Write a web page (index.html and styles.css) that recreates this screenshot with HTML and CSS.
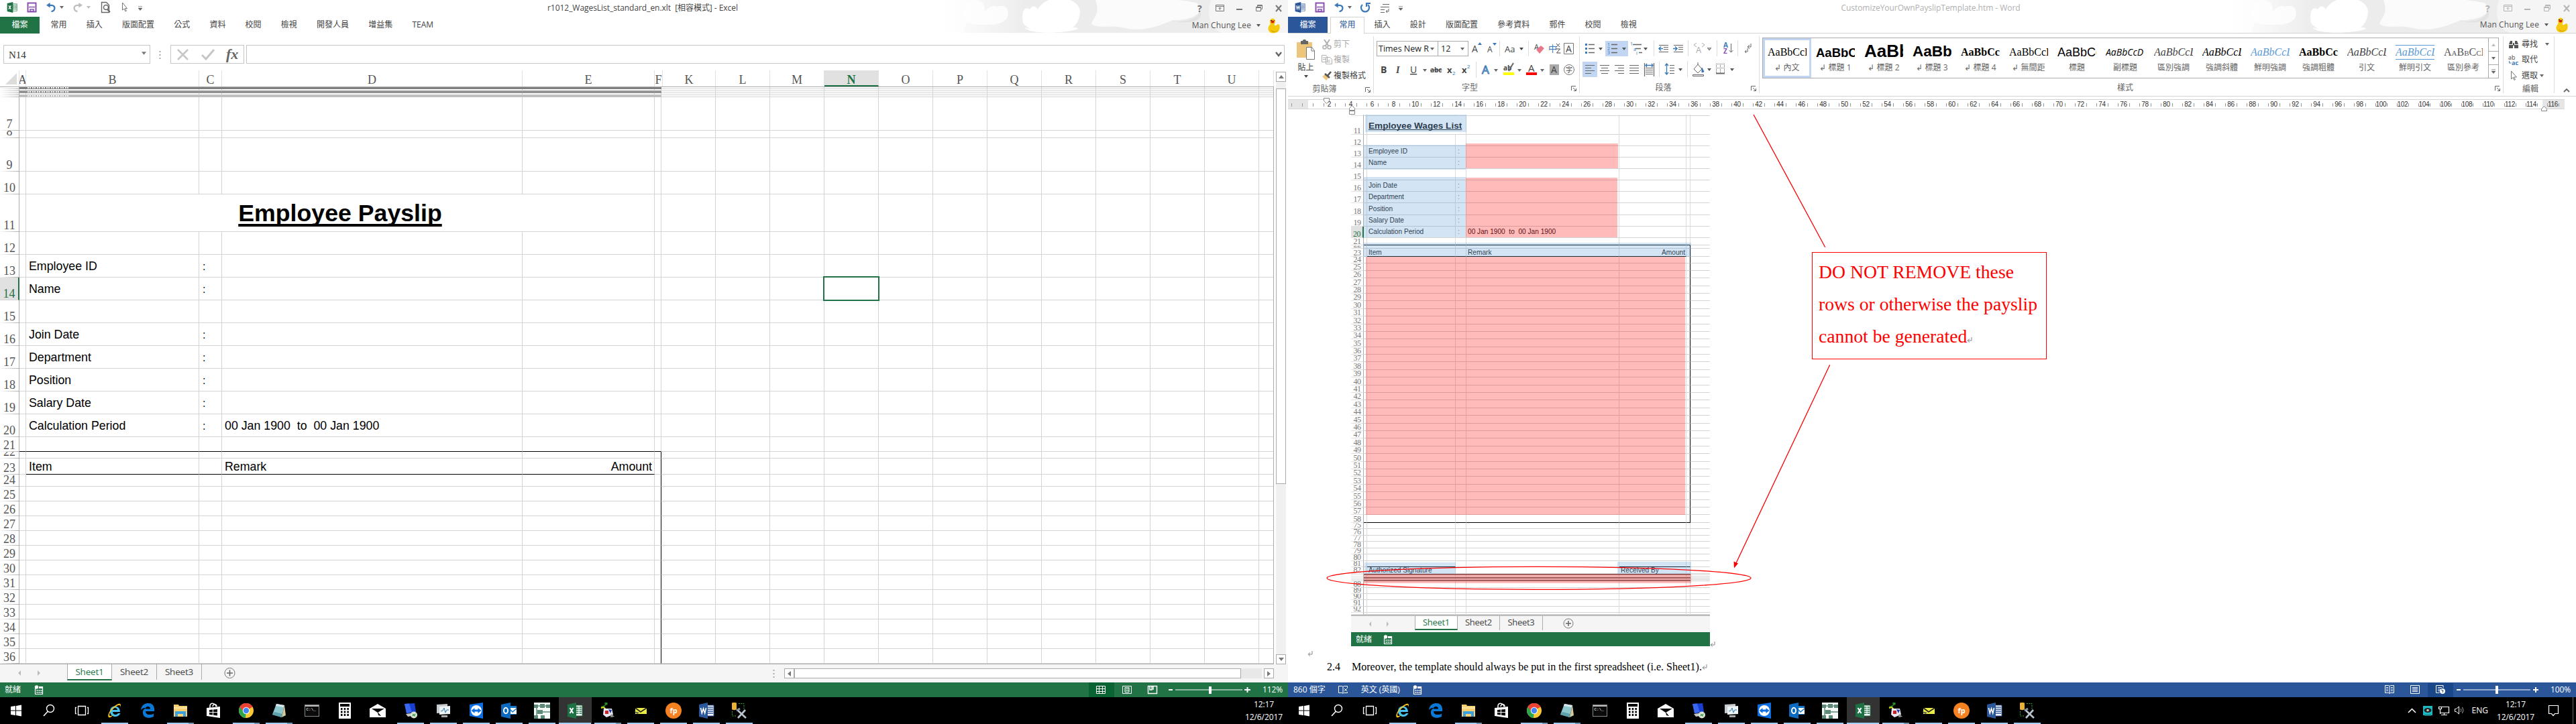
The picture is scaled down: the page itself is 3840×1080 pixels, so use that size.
FILE: index.html
```
<!DOCTYPE html>
<html lang="zh-Hant">
<head>
<meta charset="utf-8">
<title>Desktop</title>
<link rel="stylesheet" href="styles.css">
</head>
<body>
<svg class="defs" width="0" height="0" aria-hidden="true">
  <defs>
    <linearGradient id="fade"><stop offset="0" stop-color="#fff"/><stop offset=".25" stop-color="#fff" stop-opacity="0"/></linearGradient>
    <symbol id="art" viewBox="0 0 515 49">
      <rect width="515" height="49" fill="#ececec"/>
      <path d="M0 0h50L30 49H0z" fill="#f7f7f7"/>
      <path d="M30 25C30 8 38 0 48 0s17 6 14 18c8-10 14-10 20-8 6-2 12-2 15 4 3 10-2 20-18 22-20 2-46 2-49-11z" fill="#fbfbfb"/>
      <path d="M120 34c-3-16 2-26 10-20 4-8 10-4 12 0C150 0 165-4 180-2c20 2 28 14 24 26-2 12-10 18-16 20-24 4-56 8-68-10z" fill="#fff"/>
      <path d="M122 41c30 8 46-4 62-1 8 1 16 0 18 3-14 6-70 10-80-2z" fill="#fff"/>
      <path d="M228 0c60-6 120-2 150 4 16 14-4 26-34 26-22 8-40 18-72 12-20-6-36 2-50-6 2-10 14-14 6-36z" fill="#fbfbfb"/>
      <path d="M336 30c30 6 50-4 46-18 10 14-4 28-46 18z" fill="#e2e2e2"/>
      <path d="M400 0h115v49H415c-20-10-20-30-15-49z" fill="#f5f5f5"/>
      <rect width="515" height="49" fill="url(#fade)"/>
    </symbol>
    <symbol id="controls" viewBox="0 0 130 24">
      <text x="3" y="17" font-family="Open Sans, sans-serif" font-weight="700" font-size="14" fill="currentColor">?</text>
      <path d="M30.500 6.500h12v9h-12zM30.500 8.500h12M36.500 14v-4M34.500 12l2-2 2 2" fill="none" stroke="currentColor"/>
      <path d="M61 12h9v2h-9z" fill="currentColor"/>
      <path d="M90.500 10.500h7v5h-7zM92.500 10V6.500h7v6h-2M90 9.500h8M92 7.500h8" fill="none" stroke="currentColor"/>
      <path d="M120 7l8 9M128 7l-8 9" fill="none" stroke="currentColor" stroke-width="2"/>
    </symbol>
    <symbol id="duck" viewBox="0 0 24 24">
      <path d="M7 6c0-6 8-6 8 0 0 3-2 4-1 6 3 1 4-2 6-2 3 2 2 10-2 12-4 2-10 2-12-1-3-4-1-8 1-10 1-2 0-3 0-5z" fill="#f6c90e"/>
      <path d="M8 18c3 4 9 4 11 0-1 4-9 6-11 0z" fill="#c98f00"/><ellipse cx="11" cy="6.500" rx="2.500" ry="2" fill="#d81e05"/><path d="M8 4h2v1H8zM13 4h1v1h-1z" fill="#222"/>
    </symbol>
    <symbol id="save" viewBox="0 0 16 16"><path d="M1.500 1.500h12v13h-12z" fill="none" stroke="#8a4fb0" stroke-width="2"/><path d="M3 7.500h9M5 11h5v3H5z" fill="none" stroke="#8a4fb0" stroke-width="1.500"/></symbol>
    <symbol id="undo" viewBox="0 0 16 16"><path d="M6 0v8L0 4z" fill="currentColor"/><path d="M4 4h4c7 0 7 9 0 10" fill="none" stroke="currentColor" stroke-width="2.400"/></symbol>
    <symbol id="arr" viewBox="0 0 6 4"><path d="M0 0h6L3 4z" fill="currentColor"/></symbol>
    <symbol id="more" viewBox="0 0 6 7"><path d="M0 .5h6M0 3h6L3 6.500z" fill="#666" stroke="#666" stroke-width=".6"/></symbol>
    <symbol id="launch" viewBox="0 0 8 8"><path d="M.5 7V.5H7M3 3l4 4M7.500 4v3.500H4" fill="none" stroke="#666"/></symbol>
    <symbol id="cal" viewBox="0 0 14 14"><path d="M1.500 5v8.500h11v-11H7" fill="none" stroke="#fff" stroke-width="1.200"/><circle cx="3.500" cy="3" r="2.700" fill="#fff"/><path d="M7 3h5v2H7z" fill="#fff"/><path d="M3.500 8h2M6.500 8h2M9.500 8h2M3.500 11h2M6.500 11h2M9.500 11h2" stroke="#fff" stroke-width="1.400"/></symbol>
    <symbol id="ret" viewBox="0 0 8 8"><path d="M7 0v5H1M4 2.500L1 5l3 2.500" fill="none" stroke="#888"/></symbol>

    <symbol id="t-start" viewBox="0 0 24 24"><path d="M4 6l7-1v6.500H4zM12 5l8-1.500v8h-8zM4 12.500h7V19l-7-1zM12 12.500h8v8L12 19z" fill="#fff"/></symbol>
    <symbol id="t-search" viewBox="0 0 24 24"><circle cx="14" cy="9" r="5.500" fill="none" stroke="#fff" stroke-width="1.400"/><path d="M10.500 13L4 20" stroke="#fff" stroke-width="1.600"/></symbol>
    <symbol id="t-view" viewBox="0 0 24 24"><path d="M6.500 5.500h11v13h-11zM4 7.500H2.500v9H4M20 7.500h1.500v9H20" fill="none" stroke="#fff" stroke-width="1.300"/></symbol>
    <symbol id="t-ie" viewBox="0 0 24 24"><path d="M5 13c0-10 15-10 15 1H9c0 5 6 5 8 2h3.500C17 24 5 22 5 13zm4-2h7c0-4-7-4-7 0z" fill="#46c0f2"/><path d="M3 22C0 19 6 8 15 3c6-3 7 0 5 4 1-4-2-4-6-1C6 11 2 19 5 20c1 .5 4-1 5-2-2 3-5 5-7 4z" fill="#f8c41c"/></symbol>
    <symbol id="t-edge" viewBox="0 0 24 24"><path d="M2 11C3 3 9 1 13 1c6 0 10 4 9 12H9c0 6 8 6 12 3.500v4.500C13 25 4 22 5 14c0-3 2-5 5-6 0 0-5-1-8 3zm7-1.500h7c0-5-7-5-7 0z" fill="#0a78d7"/></symbol>
    <symbol id="t-folder" viewBox="0 0 24 24"><path d="M2 3h7l1 2h12v16H2z" fill="#f7d071"/><path d="M2 7h20v2H2z" fill="#fbe3a2"/><path d="M4 13h16v8h-4v-4H8v4H4z" fill="#3aa0e0"/></symbol>
    <symbol id="t-store" viewBox="0 0 24 24"><path d="M2 8l20-2v17L2 20z" fill="#fff"/><path d="M7 9V5c0-5 8-5 9 1M11 6c1-5 6-4 6 0" fill="none" stroke="#fff" stroke-width="1.500"/><path d="M6 11l5-.5V14H6zM12 10.400l6-.5V14h-6zM6 15h5v3.500L6 18zM12 15h6v4.500l-6-.8z" fill="#000"/></symbol>
    <symbol id="t-chrome" viewBox="0 0 24 24"><circle cx="12" cy="12" r="11" fill="#fcc934"/><path d="M12 12L2.500 6.500A11 11 0 0 1 21.500 6.500z" fill="#ea4335"/><path d="M12 12L2.500 6.500A11 11 0 0 0 11 23z" fill="#2fa34f"/><path d="M12 7h9.800a11 11 0 0 0-19.300-.5L8 14z" fill="#ea4335"/><circle cx="12" cy="12" r="5.200" fill="#fff"/><circle cx="12" cy="12" r="4.200" fill="#4285f4"/></symbol>
    <symbol id="t-note" viewBox="0 0 24 24"><path d="M8 2l12 2-4 18-14-4z" fill="#8fc7cf"/><path d="M8 2l12 2-1 3L7 5z" fill="#d9e8ea"/><path d="M20 4l2 15-6 3z" fill="#d6c89a"/><path d="M5 14l12 3-1 5-14-4z" fill="#5d9faa"/></symbol>
    <symbol id="t-cmd" viewBox="0 0 24 24"><rect x="1.500" y="3.500" width="21" height="17" fill="#0a0a0a" stroke="#888"/><path d="M2 4h20v2H2z" fill="#bbb"/><text x="3.500" y="12" font-size="6" font-family="Liberation Mono, monospace" fill="#fff">C:\_</text></symbol>
    <symbol id="t-calc" viewBox="0 0 24 24"><path d="M3 0h18v24H3z" fill="#fff"/><path d="M5 2h14v4H5z" fill="#000"/><path d="M6 9.500h12M6 14h12M6 18.500h12" stroke="#000" stroke-width="3" stroke-dasharray="2.500 2.200"/></symbol>
    <symbol id="t-mail" viewBox="0 0 24 24"><path d="M0 9l12-7 12 7v13H0z" fill="#fff"/><path d="M3 9h19L12 15z" fill="#000"/><path d="M12 14l5 6-4-1z" fill="#000"/></symbol>
    <symbol id="t-rdp" viewBox="0 0 24 24"><path d="M3 2l15-1 2 13-14 2z" fill="#173fd0"/><path d="M3 2l7-.5L14 15l-8 1z" fill="#3b66ee"/><path d="M5 17l14-2 2 4-13 2z" fill="#c9c9c9"/><circle cx="17" cy="18.500" r="5" fill="#d9e4d6"/><path d="M14.500 20l5-3M15 17l4 3.500" stroke="#3a9a3a" stroke-width="1.200"/></symbol>
    <symbol id="t-mon" viewBox="0 0 24 24"><path d="M2 3l16-1v13L2 16z" fill="#c6cbcf"/><path d="M6 6l16-1v12L6 18z" fill="#eef3f6"/><path d="M8 13l3-1 2-4 2 7 2-4h3" fill="none" stroke="#2a7fb0"/><path d="M9 19h9v3H9z" fill="#aaa"/></symbol>
    <symbol id="t-tv" viewBox="0 0 24 24"><path d="M2 3l20-3v24L2 20z" fill="#0d6fe0"/><circle cx="12" cy="12" r="8" fill="#fff"/><path d="M4.500 12l5-4v2.500h5V8l5 4-5 4v-2.500h-5V16z" fill="#0d6fe0"/></symbol>
    <symbol id="t-outlook" viewBox="0 0 24 24"><path d="M10 5h13v13H10z" fill="#0f77c9"/><path d="M12 8h11v9H12z" fill="#fff"/><path d="M12 9l5 5 6-5" fill="none" stroke="#0f77c9" stroke-width="1.500"/><path d="M0 3l14-3v24L0 21z" fill="#0d6abf"/><ellipse cx="7" cy="12" rx="3" ry="4.300" fill="none" stroke="#fff" stroke-width="2"/></symbol>
    <symbol id="t-flow" viewBox="0 0 24 24"><path d="M0 0h24v24H0z" fill="#f5faf6"/><path d="M0 3h6v5H0zM9 2h7v6H9zM18 3h6v5h-6zM5 11h8v6H5zM0 19h6v5H0zM10 19h6v5h-6z" fill="#5f8a78"/><path d="M6 5h12M12 14h12M4 8v12" stroke="#5f8a78" stroke-width="1.500"/></symbol>
    <symbol id="t-excel" viewBox="0 0 24 24"><path d="M12 4h11v16H12z" fill="#fff" stroke="#217346"/><path d="M14 7h8M14 10h8M14 13h8M14 16h8" stroke="#217346" stroke-width="1.500"/><path d="M18 5v14" stroke="#fff"/><path d="M1 3l13-3v24L1 21z" fill="#1e7145"/><path d="M4.500 8l5 8M9.500 8l-5 8" stroke="#fff" stroke-width="2"/></symbol>
    <symbol id="t-word" viewBox="0 0 24 24"><path d="M12 4h11v16H12z" fill="#fff" stroke="#2b579a"/><path d="M14 7h8M14 10h8M14 13h8M14 16h8" stroke="#2b579a" stroke-width="1.300"/><path d="M1 3l13-3v24L1 21z" fill="#2b579a"/><path d="M3.500 8l1.800 8 2.200-7 2.200 7 1.800-8" fill="none" stroke="#fff" stroke-width="1.600"/></symbol>
    <symbol id="t-nut" viewBox="0 0 24 24"><path d="M8 0h3v3H8zM9 3l-3 4-4-1" stroke="#2c9a2c" fill="#1c7a1c"/><path d="M2 8l4-1 3 3" fill="none" stroke="#d8d820" stroke-width="2"/><path d="M6 9h12l2 9-10 4-5-4z" fill="#e8e8f4"/><path d="M8 12h5v5H8z" fill="#c22"/><path d="M13 10l5 1-2 5z" fill="#2233aa"/><path d="M17 17l5 4-6 1z" fill="#999"/></symbol>
    <symbol id="t-memo" viewBox="0 0 24 24"><path d="M4 8h17v9H4z" fill="#ecec46"/><path d="M4 8l8 6 9-6" fill="none" stroke="#222" stroke-width="1.600"/><path d="M2 13l5 4 3-2" fill="#555"/></symbol>
    <symbol id="t-fp" viewBox="0 0 24 24"><circle cx="12" cy="12" r="12" fill="#f58220"/><text x="12" y="16" text-anchor="middle" font-family="Open Sans, sans-serif" font-weight="700" font-size="11" fill="#fff">fp</text></symbol>
    <symbol id="t-tool" viewBox="0 0 24 24"><path d="M1 1c0-1.500 7-1.500 7 0v9c0 1.500-7 1.500-7 0z" fill="#e8b23a"/><path d="M11 1.500h8v8M1.500 13v7h7" fill="none" stroke="#2fae2f" stroke-dasharray="2 1.500"/><path d="M9 11l13 12M21 11L10 23" stroke="#b9c4cf" stroke-width="2.600"/><path d="M8 12l5-3" stroke="#8a98a6" stroke-width="3"/></symbol>
  </defs>
</svg>

<main class="desktop">
  <section class="window excel">
    <header class="titlebar">
      <svg class="art"><use href="#art"/></svg>
      <svg class="qat" width="230" height="25">
        <use href="#t-excel" x="9" y="3" width="18" height="16"/>
        <use href="#save" x="40" y="3" width="16" height="16"/>
        <use href="#undo" x="69" y="4" width="15" height="15" color="#3b78b8"/><use href="#arr" x="89" y="9" width="6" height="4" color="#666"/>
        <g transform="translate(123 4) scale(-1 1)"><use href="#undo" width="15" height="15" color="#bdbdbd"/></g><use href="#arr" x="129" y="9" width="6" height="4" color="#bdbdbd"/>
        <path d="M151.500 18.500v-15h7l4 4v11z" fill="none" stroke="#666" stroke-width="1.400"/><circle cx="158" cy="11" r="3.500" fill="#fff" stroke="#666" stroke-width="1.500"/><path d="M160 14l4 4" stroke="#666" stroke-width="2"/>
        <path d="M182.500 4v11l2.500-2 2 4 1.500-.7-2-3.800h3z" fill="#fff" stroke="#777"/>
        <use href="#more" x="206" y="9" width="6" height="7"/>
      </svg>
      <h1 class="caption">r1012_WagesList_standard_en.xlt&nbsp; [相容模式] - Excel</h1>
      <svg class="controls"><use href="#controls"/></svg>
    </header>
    <nav class="tabs">
      <span class="file">檔案</span><span>常用</span><span>插入</span><span>版面配置</span><span>公式</span><span>資料</span><span>校閱</span><span>檢視</span><span>開發人員</span><span>增益集</span><span>TEAM</span>
      <div class="user">Man Chung Lee<svg width="6" height="4"><use href="#arr"/></svg><svg class="duck" width="24" height="24"><use href="#duck"/></svg></div>
    </nav>
    <div class="formula">
      <div class="namebox">N14<svg width="7" height="5"><use href="#arr"/></svg></div>
      <svg class="dots" width="30" height="30"><path d="M14.500 9v14" stroke="#aaa" stroke-width="2" stroke-dasharray="2 3"/></svg>
      <div class="fx"><svg width="108" height="26"><path d="M10 6l15 15M25 6L10 21" stroke="#c6c6c6" stroke-width="2.500"/><path d="M46 14l6 6L64 6" fill="none" stroke="#c6c6c6" stroke-width="3"/><text x="82" y="20" font-family="Liberation Serif, serif" font-style="italic" font-weight="700" font-size="22" fill="#666">fx</text></svg></div>
      <div class="finput"><svg width="14" height="10"><path d="M2 2l4 5 4-5" fill="none" stroke="#666" stroke-width="2.400"/></svg></div>
    </div>
    <div class="sheet">
      <div class="grid">
        <div class="colheads" id="colheads"></div>
        <div id="rows"></div>
        <div class="selection"></div>
      </div>
      <div class="vscroll"><i class="btn"><svg width="8" height="5"><path d="M0 5h8L4 0z" fill="#777"/></svg></i><i class="thumb"></i><i class="btn end"><svg width="8" height="5"><path d="M0 0h8L4 5z" fill="#777"/></svg></i></div>
    </div>
    <div class="sheettabs">
      <svg width="100" height="27"><path d="M31 9v8l-4-4zM56 9v8l4-4z" fill="#bbb"/></svg>
      <span class="on">Sheet1</span><span>Sheet2</span><span>Sheet3</span>
      <svg width="60" height="27"><circle cx="41.500" cy="13" r="7.500" fill="none" stroke="#777"/><path d="M37 13h9M41.500 8.500v9" stroke="#666" stroke-width="1.600"/></svg>
      <div class="hscroll"><svg width="16" height="16"><path d="M2.500 2v12" stroke="#aaa" stroke-width="2" stroke-dasharray="2 3"/></svg><i class="btn"><svg width="5" height="8"><path d="M5 0v8L0 4z" fill="#777"/></svg></i><i class="thumb"></i><i class="btn"><svg width="5" height="8"><path d="M0 0v8l5-4z" fill="#777"/></svg></i></div>
    </div>
    <footer class="status">
      <span>就緒</span><svg width="14" height="14"><use href="#cal"/></svg>
      <svg class="zoom" width="290" height="22"><path d="M33 0h38v22H33z" fill="#0a6332"/>
        <path d="M44.500 5.500h13v11h-13zM44 9.500h14M44 13.500h14M48.500 5v12M53.500 5v12" fill="none" stroke="#fff"/>
        <path d="M83.500 5.500h13v11h-13zM87 7.500h6v7h-6zM88 9.500h5M88 12h5" fill="none" stroke="#fff"/>
        <path d="M121.500 5.500h13v11h-13zM124 5v6h3V5M129 5v6" fill="none" stroke="#fff" stroke-width="1.500"/>
        <path d="M152 10h6v2h-6zM162 10.500h100v1H162zM212 6h4v11h-4zM265 10h9v2h-9zM268.500 7h2v8h-2z" fill="#fff"/></svg>
      <span class="pct">112%</span>
    </footer>
    <div class="taskbar"><div class="apps"></div><div class="clock">12:17<br>12/6/2017</div></div>
  </section>

  <section class="window word">
    <header class="titlebar">
      <svg class="art"><use href="#art"/></svg>
      <svg class="qat" width="230" height="25">
        <use href="#t-word" x="9" y="3" width="18" height="16"/>
        <use href="#save" x="40" y="3" width="16" height="16"/>
        <use href="#undo" x="69" y="4" width="15" height="15" color="#3b78b8"/><use href="#arr" x="89" y="9" width="6" height="4" color="#666"/>
        <path d="M111 7a6 6 0 1 0 8 0M117 4v6M117 5h6" fill="none" stroke="#3b78b8" stroke-width="2.200"/>
        <path d="M141 6.500h10M138 10.500h13M138 14.500h6M138 18.500h6M150 13v4h-4M148 15l-2 2 2 2" fill="none" stroke="#666"/>
        <use href="#more" x="165" y="9" width="6" height="7"/>
      </svg>
      <h1 class="caption">CustomizeYourOwnPayslipTemplate.htm - Word</h1>
      <svg class="controls"><use href="#controls"/></svg>
    </header>
    <nav class="tabs">
      <span class="file">檔案</span><span class="active">常用</span><span>插入</span><span>設計</span><span>版面配置</span><span>參考資料</span><span>郵件</span><span>校閱</span><span>檢視</span>
      <div class="user">Man Chung Lee<svg width="6" height="4"><use href="#arr"/></svg><svg class="duck" width="24" height="24"><use href="#duck"/></svg></div>
    </nav>
    <div class="ribbon">
      <div class="group clipboard">
        <div class="tools">
          <div class="paste">
            <svg width="30" height="32"><path d="M1 5h23v23H1z" fill="#edc57b"/><path d="M7 3h3c0-3 5-3 5 0h3v5H7z" fill="#666"/><path d="M15.500 12.500h8l4 5v13h-12z" fill="#fff" stroke="#777"/><path d="M23 12v6h5" fill="none" stroke="#777"/></svg>
            貼上<svg width="6" height="4"><use href="#arr"/></svg>
          </div>
          <ul>
            <li class="off"><svg width="16" height="16"><path d="M4 1l6 9M12 1L6 10" stroke="#b0b0b0" stroke-width="2"/><circle cx="4.500" cy="12.500" r="2.500" fill="none" stroke="#b0b0b0" stroke-width="1.500"/><circle cx="11.500" cy="12.500" r="2.500" fill="none" stroke="#b0b0b0" stroke-width="1.500"/></svg>剪下</li>
            <li class="off"><svg width="16" height="16"><path d="M.5 1.500h6l2 2v8h-8zM6.500 4.500h6l3 3v7h-9zM2 5h4M2 7.500h4M8 9h5M8 11.500h5" fill="#fff" stroke="#b0b0b0"/></svg>複製</li>
            <li><svg width="16" height="16"><path d="M1 9l5-3 5 4-4 5z" fill="#edc57b"/><path d="M5 5l7 6M9 8l5-6" stroke="#555" stroke-width="2.600"/></svg>複製格式</li>
          </ul>
        </div>
        <div class="glabel">剪貼簿<svg width="8" height="8"><use href="#launch"/></svg></div>
      </div>
      <div class="group font">
        <div class="tools col">
          <div class="line">
            <span class="box fam">Times New R<svg width="6" height="4"><use href="#arr"/></svg></span><span class="box size">12<svg width="6" height="4"><use href="#arr"/></svg></span>
            <svg class="ic" width="160" height="24">
              <g font-family="Open Sans, sans-serif" fill="#444"><text x="5" y="17" font-size="14">A</text><path d="M14 6l3-4 3 4z" fill="#3b78b8"/><text x="28" y="17" font-size="12">A</text><path d="M36 3h6l-3 4z" fill="#3b78b8"/><text x="54" y="17" font-size="13">Aa</text><path d="M76 10h6l-3 4z"/><text x="98" y="13" font-size="11">A</text></g>
              <path d="M46.500 0v23M89.500 0v23" stroke="#ddd"/><path d="M101 13l7-6 5 4-7 8z" fill="#e8788a"/>
              <text x="119" y="16" font-size="13" fill="#3b78b8" font-family="Noto Sans CJK TC, sans-serif">中</text><path d="M131 4l5 5M136 4l-5 5M130.500 12h6l-5 6h6" fill="none" stroke="#444"/>
              <path d="M142.500 3.500h14v16h-14z" fill="none" stroke="#777"/><text x="145" y="17" font-size="14" font-family="Open Sans, sans-serif" fill="#444">A</text>
            </svg>
          </div>
          <div class="line">
            <svg class="ic" width="300" height="28" font-family="Open Sans, sans-serif" fill="#444" font-size="14">
              <text x="6" y="19" font-weight="700">B</text><text x="29" y="19" font-style="italic" font-family="Liberation Serif, serif" font-weight="700">I</text><text x="50" y="19" text-decoration="underline">U</text><use href="#arr" x="69" y="13" width="6" height="4" color="#666"/>
              <text x="80" y="18" font-size="10" font-weight="700" text-decoration="line-through">abc</text><text x="105" y="19" font-size="13" font-weight="700">x</text><text x="113" y="22" font-size="8" fill="#3b78b8">2</text><text x="127" y="19" font-size="13" font-weight="700">x</text><text x="135" y="12" font-size="8" fill="#3b78b8">2</text>
              <path d="M148.500 2v24" stroke="#ddd"/><text x="157" y="20" font-size="17" fill="#fff" stroke="#3b78b8">A</text><use href="#arr" x="175" y="13" width="6" height="4" color="#666"/>
              <text x="189" y="15" font-size="10" font-weight="700">ab</text><path d="M204 4l-7 12" stroke="#666" stroke-width="2"/><path d="M189 18h16v4h-16z" fill="#ff0"/><use href="#arr" x="210" y="13" width="6" height="4" color="#666"/>
              <text x="226" y="17" font-size="15">A</text><path d="M223 18h16v4h-16z" fill="red"/><use href="#arr" x="244" y="13" width="6" height="4" color="#666"/>
              <path d="M258 6h14v16h-14z" fill="#aaa"/><text x="260" y="19" font-size="14">A</text><circle cx="287" cy="14" r="7.500" fill="none" stroke="#777"/><text x="282" y="18" font-size="10" font-family="Noto Sans CJK TC, sans-serif">字</text>
            </svg>
          </div>
        </div>
        <div class="glabel">字型<svg width="8" height="8"><use href="#launch"/></svg></div>
      </div>
      <div class="group para">
        <div class="tools">
          <svg class="ic" width="262" height="64" fill="none" stroke="#666">
            <path d="M38 7h34v23H38z" fill="#c2d5f2" stroke="none"/><path d="M4 38h22v23H4z" fill="#c2d5f2" stroke="none"/>
            <g transform="translate(0 2)">
            <path d="M13 10.500h9M13 16.500h9M13 22.500h9M47 10.500h9M47 16.500h9M47 22.500h9M79 10.500h13M83 16.500h8M88 22.500h5" stroke-width="1.400"/>
            <path d="M8 9h3v3H8zM8 15h3v3H8zM8 21h3v3H8z" fill="#3b78b8" stroke="none"/>
            <g font-family="Open Sans, sans-serif" font-size="7" fill="#3b78b8" stroke="none"><text x="41" y="13">1</text><text x="41" y="19">2</text><text x="41" y="25">3</text><text x="75" y="12">1</text><text x="80" y="20">a</text><text x="84" y="26">i</text></g>
            <g color="#555" stroke="none"><use href="#arr" x="28" y="15" width="6" height="4"/><use href="#arr" x="63" y="15" width="6" height="4"/><use href="#arr" x="95" y="15" width="6" height="4"/><use href="#arr" x="147" y="46" width="6" height="4"/><use href="#arr" x="190" y="46" width="6" height="4"/><use href="#arr" x="224" y="46" width="6" height="4"/></g>
            <path d="M110.500 4v24M161.500 4v24M204.500 4v24M235.500 4v24M118.500 35v24M160.500 35v24" stroke="#ddd"/>
            <path d="M118 11.500h14M125 14.500h7M125 17.500h7M118 21.500h14M140 11.500h14M147 14.500h7M147 17.500h7M140 21.500h14"/>
            <path d="M124 16.500h-6M121 13.500l-3 3 3 3M139 16.500h6M142 13.500l3 3-3 3" stroke="#3b78b8" stroke-width="1.500"/>
            <text x="173" y="23" font-size="13" fill="#aaa" stroke="none" font-family="Open Sans, sans-serif">A</text><path d="M170 11l4-3M170 11l4 3M186 11l-4-3M186 11l-4 3" stroke="#aaa"/><use href="#arr" x="190" y="15" width="6" height="4" color="#bbb"/>
            <g font-family="Open Sans, sans-serif" font-size="10" font-weight="700" stroke="none"><text x="214" y="15" fill="#3b78b8">A</text><text x="214" y="24" fill="#8a4fb0">Z</text></g><path d="M225.500 9v13M222.500 19l3 3 3-3M255 9v5h-5M253 11l-3 3 3 3M250 16v5h-4M248 19l-2 2 2 2"/>
            <path d="M8 41.500h14M8 45.500h9M8 49.500h14M8 53.500h9M30 41.500h14M32 45.500h10M30 49.500h14M32 53.500h10M52 41.500h14M57 45.500h9M52 49.500h14M57 53.500h9M74 41.500h14M74 45.500h14M74 49.500h14M74 53.500h14M98 45.500h11M98 48.500h11M98 51.500h11M98 54.500h11M96.500 38v20M110.500 38v20" stroke-width="1.200"/>
            <path d="M98 41.500h11M100 39l-2 2.500 2 2.500M107 39l2 2.500-2 2.500M129.500 39v16M127 42l2.500-3 2.500 3M127 52l2.500 3 2.500-3" stroke="#3b78b8" stroke-width="1.300"/>
            <path d="M134 41.500h7M134 45.500h7M134 49.500h7M134 53.500h7M170 47l6-7 6 7-6 6zM176 40v-3"/><path d="M203 39.500h13M203 45.500h13M209.500 39v13M203.500 39v13M215.500 39v13" stroke-dasharray="1 1"/><path d="M182 45l3 6-3 1z" fill="#3b78b8" stroke="#3b78b8"/><path d="M168.500 55.500h16v2h-16z"/><path d="M203 53.500h13" stroke-width="2"/>
            </g>
          </svg>
        </div>
        <div class="glabel">段落<svg width="8" height="8"><use href="#launch"/></svg></div>
      </div>
      <div class="group styles">
        <div class="gallery">
          <div class="items" id="styles"></div>
          <div class="spin"><i><svg width="6" height="4"><path d="M0 4h6L3 0z" fill="#bbb"/></svg></i><i><svg width="6" height="4"><use href="#arr"/></svg></i><i><svg width="6" height="7"><use href="#more"/></svg></i></div>
        </div>
        <div class="glabel">樣式<svg width="8" height="8"><use href="#launch"/></svg></div>
      </div>
      <div class="group edit">
        <ul>
          <li><svg width="16" height="16"><path d="M1 8l2-5h3v5zM15 8l-2-5h-3v5zM1 9h6v5H1zM9 9h6v5H9zM7 6h2v4H7z" fill="#555"/></svg>尋找<svg class="dd" width="6" height="4"><use href="#arr"/></svg></li>
          <li><svg width="18" height="16"><text x="0" y="8" font-size="9" fill="#444" font-family="Open Sans, sans-serif">ab</text><text x="5" y="16" font-size="9" font-weight="700" fill="#3b78b8" font-family="Open Sans, sans-serif">ac</text><path d="M1.500 10v3h3" fill="none" stroke="#3b78b8"/></svg>取代</li>
          <li><svg width="16" height="16"><path d="M4.500 1v12l2.500-2.500 2 4 1.500-.7-2-3.800h4z" fill="#fff" stroke="#777"/></svg>選取<svg class="dd near" width="6" height="4"><use href="#arr"/></svg></li>
        </ul>
        <div class="glabel">編輯</div>
      </div>
      <svg class="collapse" width="10" height="7"><path d="M1 6l4-4 4 4" fill="none" stroke="#666" stroke-width="1.800"/></svg>
    </div>
    <div class="ruler"><div class="marks" id="marks"></div>
      <svg class="indents" width="1920" height="26"><path d="M53.500.5h8v4l-4 4-4-4zM95.500 11.500l-4 4v3h8v-3zM91.500 19.500h8v5h-8zM1872.500 12.500l-4 4v3h8v-3z" fill="#fff" stroke="#888"/></svg>
    </div>
    <div class="doc">
      <div class="picture">
        <div id="picrows"></div>
        <div class="pictabs">
          <svg width="95" height="24"><path d="M30 8v8l-3-4zM53 8v8l3-4z" fill="#bbb"/></svg>
          <span class="on">Sheet1</span><span>Sheet2</span><span>Sheet3</span>
          <svg width="60" height="24"><circle cx="38" cy="11" r="7" fill="none" stroke="#777"/><path d="M34 11h8M38 7v8" stroke="#666" stroke-width="1.500"/></svg>
        </div>
        <div class="picstatus">就緒<svg width="14" height="14"><use href="#cal"/></svg></div>
      </div>
      <p class="para24"><span>2.4</span>Moreover, the template should always be put in the first spreadsheet (i.e. Sheet1).<svg width="8" height="8"><use href="#ret"/></svg></p>
      <svg class="overlay" width="1920" height="854" viewBox="0 164 1920 854">
        <g fill="#5b9bd5" fill-opacity=".27"><path d="M115 171h151v26H115zM113 216h152v37H113zM113 264h152v90H113zM113 362h488v21H113zM114 839h136v17H114zM491 838h110v18H491z"/></g>
        <g fill="#f00" fill-opacity=".27"><path d="M265 214h227v37H265zM265 265h226v89H265zM116 383h476v385H116zM113 856h488v14H113z"/></g>
        <g fill="none" stroke="#f00" stroke-width="1.300"><path d="M694 171L800.700 368.700M807.700 544.300L667 842"/><ellipse cx="374" cy="862.300" rx="316" ry="17"/></g>
        <path d="M665 847.500l-.5-10 6.500 3z" fill="#f00"/>
        <use href="#ret" x="629" y="957" width="8" height="8"/><use href="#ret" x="29" y="971" width="8" height="8"/>
      </svg>
      <div class="callout">DO NOT REMOVE these rows or otherwise the payslip cannot be generated<svg width="8" height="8"><use href="#ret"/></svg></div>
    </div>
    <footer class="status">
      <span>860 個字</span><svg width="16" height="14"><path d="M1.500 1.500h5l1.500 1v10l-1.500-1h-5zM8 2.500l1.500-1h5v3M9 12l1-.5h4.500V10M10 5l4 4M14 5l-4 4" fill="none" stroke="#fff"/></svg><span>英文 (英國)</span><svg width="14" height="14"><use href="#cal"/></svg>
      <svg class="zoom" width="210" height="22"><path d="M29 1h38v21H29z" fill="#19478a"/>
        <path d="M52 8V4.500H41.500v11h5M44 7.500h6M44 10h4M44 12.500h3" fill="none" stroke="#fff"/><circle cx="51" cy="13" r="4" fill="#fff"/><path d="M49 11l3 1-1 3" fill="none" stroke="#19478a"/>
        <path d="M72 10h6v2h-6zM82 10.500h100v1H82zM130 5h4v12h-4zM186 10h8v2h-8zM189 7h2v8h-2z" fill="#fff"/></svg>
      <span class="pct">100%</span>
      <svg class="views" width="80" height="22"><path d="M15.500 4.500h5l1.500 1 1.500-1h5v11h-5l-1.500 1-1.500-1h-5zM22 6v10M17 7.500h3M17 10h3M17 12.500h3M24 7.500h3M24 10h3M24 12.500h3M53.500 4.500h13v12h-13zM56 7.500h8M56 9.500h8M56 11.500h8M56 13.500h8" fill="none" stroke="#fff"/></svg>
    </footer>
    <div class="taskbar"><div class="apps"></div>
      <svg class="tray" width="100" height="40"><path d="M9 23l5.500-5.500L20 23" fill="none" stroke="#fff" stroke-width="1.500"/><path d="M31 13h14v14H31z" fill="#20b8c0"/><path d="M33 26h10v2H33z" fill="#147a80"/><ellipse cx="38" cy="19.500" rx="5.500" ry="3.500" fill="#222"/><circle cx="38" cy="19.500" r="1.800" fill="#ccc"/><path d="M57.500 14.500h12v9H57M62.500 24v3M58 26.500h9M54.500 14.500h4v3h-4zM56.500 18v7" fill="none" stroke="#fff" stroke-width="1.200"/><path d="M78.500 17.500h2l4-3.500v11l-4-3.500h-2z" fill="none" stroke="#fff"/><path d="M87 17q2 2.500 0 5M89.500 15q3 4.500 0 9" fill="none" stroke="#aaa"/></svg>
      <span class="lang">ENG</span>
      <div class="clock">12:17<br>12/6/2017</div>
      <svg class="note" width="42" height="40"><path d="M1.500 12.500h14v12h-5l-2.500 3-2.500-3h-4z" fill="none" stroke="#fff" stroke-width="1.200"/><path d="M37.500 0v40" stroke="#666"/></svg>
    </div>
  </section>
</main>
<script src="app.js"></script>
</body>
</html>
```
FILE: styles.css
```
* { box-sizing: border-box; }
body { margin: 0; background: #fff; font: 12px/16px "Open Sans", "Noto Sans CJK TC", sans-serif; color: #444; }
svg { display: block; flex: none; overflow: visible; }
ul { list-style: none; margin: 0; padding: 0; }
.defs { position: absolute; }
.desktop { display: flex; width: 3840px; height: 1080px; overflow: hidden; }
.window { width: 1920px; height: 1080px; display: flex; flex-direction: column; background: #fff; position: relative; overflow: hidden; }

.titlebar { height: 25px; display: flex; align-items: center; position: relative; }
.titlebar .art { position: absolute; left: 1405px; top: 0; width: 515px; height: 49px; }
.qat { width: 230px; }
.caption { flex: 1; margin: 0; text-align: center; font-size: 12px; font-weight: 400; letter-spacing: -.04px; padding: 0 96px 2px 0; }
.word .caption { color: #b0b0b0; }
.controls { position: relative; width: 130px; height: 24px; margin-right: 8px; color: #777; }
.word .controls { color: #b5b5b5; }

.tabs { height: 25px; display: flex; align-items: center; position: relative; }
.tabs span { height: 25px; line-height: 23px; padding: 0 14.600px; }
.tabs .file { width: 59px; padding: 0; text-align: center; color: #fff; background: #217346; margin-right: 2px; }
.word .tabs { border-bottom: 1px solid #d4d4d4; }
.word .tabs .file { background: #2b579a; }
.word .tabs span { height: 24px; }
.word .tabs .active { height: 25px; width: 51px; padding: 0; margin: 1px 0 0 2px; text-align: center; border: 1px solid #d4d4d4; border-bottom: 0; background: #fff; color: #2b579a; line-height: 22px; }
.user { margin-left: auto; display: flex; align-items: center; gap: 8px; letter-spacing: .1px; color: #555; }
.user .duck { margin: 0 10px 0 -1px; }

.formula { height: 55px; padding: 17px 5px 0; display: flex; }
.namebox { width: 219px; height: 28px; border: 1px solid #c6c6c6; display: flex; align-items: center; justify-content: space-between; padding: 2px 5px 0 7px; font: 15px/20px "Liberation Serif", serif; color: #333; }
.namebox svg { color: #777; margin-top: -5px; }
.fx { width: 110px; height: 28px; border: 1px solid #c6c6c6; margin-right: 3px; }
.finput { flex: 1; height: 28px; border: 1px solid #c6c6c6; display: flex; justify-content: flex-end; align-items: center; }

.sheet { height: 886px; display: flex; }
.grid { width: 1899px; position: relative; border-right: 1px solid #ababab; border-bottom: 1px solid #ababab; }
.colheads { display: grid; height: 25px; grid-template-columns: 29px 10px 258px 34px 448px 197px 12px 79px repeat(10, 81px) 22px; border-bottom: 1px solid #ababab; font: 18px/28px "Liberation Serif", serif; color: #555; text-align: center; }
.colheads div { border-right: 1px solid #e1e1e1; overflow: hidden; display: flex; justify-content: center; white-space: nowrap; }
.colheads .on { background: #e1e1e1; color: #217346; font-weight: 700; border-bottom: 2px solid #217346; }
.colheads .corner { align-items: flex-end; padding: 0 2px 3px 7px; }
.row { display: grid; grid-template-columns: 29px 10px 258px 34px 448px 197px 10px repeat(11, 81px) 21px; }
.row > div { border-right: 1px solid #d4d4d4; border-bottom: 1px solid #d4d4d4; overflow: hidden; display: flex; align-items: center; white-space: pre; font: 17.800px/20px "Liberation Sans", sans-serif; color: #000; padding-left: 4px; min-width: 0; }
.row > div:last-child { border-right: 0; }
.row > .num { justify-content: center; align-items: flex-end; font: 18px/18px "Liberation Serif", serif; color: #555; padding: 0; border-image: linear-gradient(90deg, #fff, #ababab) 1; }
.row > .num.on { background: #e1e1e1; color: #217346; border-image: none; border-right: 2px solid #217346; }
.row > .b-black { border-bottom-color: #000; }
.row > .r-black { border-right-color: #000; }
.row > .colon { padding: 2px 0 0 5px; font-size: 16px; }
.row > .title { grid-column: span 4; justify-content: center; font: bold 35.700px/40px "Liberation Sans", sans-serif; text-decoration: underline; text-decoration-thickness: 4px; text-underline-offset: 4px; text-decoration-skip-ink: none; padding: 0; }
.row > .right { justify-content: flex-end; padding-right: 3px; }
.row > .band1 { background: #808080; border-color: #808080; }
.row > .band2 { background: #949494; border-color: #949494; }
.row > .band3 { background: #bfbfbf; border-color: #bfbfbf; }
.row > .pre2 { border-bottom-color: #949494; }
.row > .pre3 { border-bottom-color: #bfbfbf; }
.row > .bits { padding: 0 0 0 2px; }
.bits i { width: 62px; height: 2px; background: repeating-linear-gradient(90deg, #fff 0 2px, transparent 2px 3px, #fff 3px 5px, transparent 5px 7px); }
.selection { position: absolute; left: 1227px; top: 307px; width: 84px; height: 37px; border: 2px solid #217346; }
.vscroll { width: 21px; padding: 2px 2px 0 3px; display: flex; flex-direction: column; background: linear-gradient(#f0f0f0, #f0f0f0) 3px 2px / 15px 884px no-repeat; }
.btn { flex: none; display: flex; align-items: center; justify-content: center; width: 15px; height: 15px; border: 1px solid #ababab; background: #fff; }
.vscroll .thumb { width: 15px; height: 590px; margin-top: 10px; border: 1px solid #ababab; background: #fff; }
.vscroll .end { margin-top: auto; }

.sheettabs { height: 27px; background: #f5f5f5; display: flex; font-size: 13.500px; letter-spacing: -.2px; }
.sheettabs span { width: 67px; height: 23px; line-height: 22px; text-align: center; border-right: 1px solid #ababab; }
.sheettabs .on { color: #217346; background: #fff; border: 1px solid #ababab; border-top: 0; border-bottom: 2px solid #217346; height: 24px; }
.hscroll { margin: 6px 21px 0 auto; width: 748px; height: 15px; display: flex; background: linear-gradient(#e8e8e8, #e8e8e8) 30px 0 / 700px 15px no-repeat; }
.hscroll > svg { margin-right: 2px; }
.hscroll .thumb { width: 666px; height: 15px; border: 1px solid #ababab; background: #fff; }
.hscroll .btn:last-child { margin-left: auto; }

.status { height: 22px; background: #217346; color: #fff; display: flex; align-items: center; padding-left: 7px; position: relative; }
.excel .status > svg:first-of-type { margin-left: 20px; }
.status .zoom { margin-left: auto; }
.pct { width: 40px; padding-right: 8px; text-align: right; letter-spacing: -.1px; }
.word .status { background: #2b579a; padding-left: 8px; }
.word .status > svg:nth-of-type(1) { margin: 0 19px 0 18px; }
.word .status > svg:nth-of-type(2) { margin-left: 19px; }
.views { position: absolute; left: 1620px; top: 0; }

.taskbar { height: 40px; background: #000; color: #fff; display: flex; }
.apps { display: flex; flex: 1; }
.apps div { width: 49px; padding: 8px 1px 0 0; display: flex; flex-direction: column; align-items: center; height: 40px; gap: 6px; }
.apps i { width: 40px; height: 2px; background: #9fd0fa; }
.apps .many i { border-right: 8px solid #6f95b5; }
.apps .now { background: #333; }
.apps .now i { width: 48px; }
.clock { text-align: center; line-height: 19px; padding-top: 1px; width: 72px; letter-spacing: -.1px; }
.word .clock { margin-right: 12px; }
.lang { line-height: 40px; margin: 0 5px 0 4px; }

.ribbon { height: 94px; border-bottom: 1px solid #d4d4d4; display: flex; position: relative; }
.group { display: flex; flex-direction: column; border-right: 1px solid #dedede; height: 85px; margin-top: 4px; }
.glabel { display: flex; height: 16px; margin-top: auto; color: #666; position: relative; justify-content: center; padding-right: 18px; }
.glabel svg { position: absolute; right: 4px; top: 5px; }
.clipboard { width: 128px; }
.clipboard .tools { display: flex; }
.paste { width: 50px; padding: 4px 0 0 3px; display: flex; flex-direction: column; align-items: center; gap: 2px; line-height: 18px; }
.clipboard li { display: flex; gap: 2px; height: 23.500px; align-items: center; line-height: 20px; }
.clipboard .off { color: #aaa; }
.font { width: 307px; padding-left: 4px; }
.font .line { display: flex; height: 24px; margin-top: 7px; }
.font .line + .line { height: 28px; margin-top: 5px; }
.font .glabel { padding-right: 24px; }
.box { height: 23px; border: 1px solid #ababab; display: flex; align-items: center; justify-content: space-between; padding: 0 5px 0 2px; font-size: 12.500px; color: #222; }
.box svg { color: #666; }
.fam { width: 92px; }
.size { width: 46px; margin-left: -1px; padding-left: 4px; }
.para { width: 268px; }
.styles { width: 1109px; padding-left: 4px; }
.styles .glabel { padding-right: 22px; }
.gallery { width: 1098px; height: 61px; margin-top: 2px; border: 1px solid #ababab; display: flex; }
.items { display: flex; width: 1082px; }
.style { width: 72px; height: 59px; padding-top: 9px; display: flex; flex-direction: column; align-items: center; color: #666; }
.style.on { border: 3px solid #c2d5f2; padding-top: 6px; }
.style b { width: 58px; height: 24px; overflow: hidden; white-space: nowrap; font: 16px/24px "Liberation Serif", serif; color: #000; margin-bottom: 3px; flex: none; }
.style .h1 { font: bold 18.500px/25px "Liberation Sans", sans-serif; }
.style .h2 { font: bold 26px/20px "Liberation Sans", sans-serif; }
.style .h3 { font: bold 22.500px/22px "Liberation Sans", sans-serif; }
.style .bold { font-weight: 700; }
.style .ttl { font: 18px/25px "Liberation Sans", sans-serif; }
.style .sub { font: italic 14px/24px "Open Sans", sans-serif; }
.style .it { font-style: italic; }
.style .grey { color: #444; }
.style .blue { color: #5b9bd5; font-style: italic; }
.style .lined { border-top: 1px solid #5b9bd5; border-bottom: 1px solid #5b9bd5; height: 22px; line-height: 20px; margin: 1px 0 4px; }
.style .caps { font-variant: small-caps; color: #555; }
.spin { width: 15px; border-left: 1px solid #ababab; display: flex; flex-direction: column; margin-left: auto; }
.spin i { flex: 1; display: flex; align-items: center; justify-content: center; border-bottom: 1px solid #ababab; color: #666; }
.spin i:last-child { border: 0; }
.edit { width: 76px; padding-left: 7px; }
.edit li { display: flex; gap: 3px; height: 23.500px; align-items: center; }
.edit li svg:first-child { width: 17px; }
.edit .dd { margin-left: 8px; color: #666; }
.edit .near { margin-left: 0; }
.edit .glabel { padding-right: 2px; }
.collapse { margin: 81px 0 0 13px; }

.ruler { height: 20px; padding: 4px 0 0; position: relative; }
.marks { width: 1903px; height: 15px; display: flex; padding-left: 45.500px; border-top: 1px solid #d6d6d6; border-bottom: 1px solid #d6d6d6; background: repeating-linear-gradient(90deg, #999 0 1px, transparent 1px 16px) 5px 5px / 33px 5px no-repeat, linear-gradient(90deg, #e6e6e6 30px, #fff 30px 1870px, #e6e6e6 1870px); }
.marks span { flex: none; width: 32px; text-align: center; font: 10px/14px "Liberation Sans", sans-serif; color: #333; letter-spacing: -.3px; background: linear-gradient(#999, #999) 7px 5px / 1px 5px no-repeat, linear-gradient(#999, #999) 24px 5px / 1px 5px no-repeat; }
.indents { position: absolute; left: 0; top: 2px; }

.doc { height: 854px; position: relative; padding: 7px 0 0 94px; overflow: hidden; }
.picture { width: 535px; height: 793px; display: flex; flex-direction: column; overflow: hidden; }
.prow { display: grid; grid-template-columns: 19px 5px 132px 16px 228px 100px 6px 29px; }
.prow > div { border-right: 1px solid #dcdcdc; border-bottom: 1px solid #d4d4d4; display: flex; align-items: center; white-space: pre; min-width: 0; min-height: 0; font: 10.150px/12px "Liberation Sans", sans-serif; color: #1a1a1a; padding-left: 2px; }
.prow > div:last-child { border-right: 0; }
.prow > .num { padding: 0; overflow: hidden; justify-content: center; align-items: flex-end; font: 12px/10px "Liberation Serif", serif; letter-spacing: -.6px; color: #777; border-right: 1px solid #ababab; border-bottom-color: #e1e1e1; }
.prow > .num.on { background: #e1e1e1; color: #217346; border-right: 2px solid #217346; }
.prow > .title { grid-column: span 2; font: bold 13.600px/16px "Liberation Sans", sans-serif; text-decoration: underline; text-decoration-skip-ink: none; padding-top: 3px; }
.prow > .colon { padding-left: 3px; color: #888; }
.prow > .right { justify-content: flex-end; padding-right: 1px; }
.prow > .b-black { border-bottom-color: #000; }
.prow > .r-black { border-right-color: #000; }
.prow > .band { background: #808080; border-color: #808080; }
.pictabs { height: 27px; border-top: 2px solid #bbb; background: #f5f5f5; display: flex; font-size: 13px; letter-spacing: -.3px; }
.pictabs span { width: 64px; height: 21px; line-height: 18px; text-align: center; border-right: 1px solid #ababab; }
.pictabs .on { background: #fff; color: #217346; border: 1px solid #ababab; border-top: 0; border-bottom: 2px solid #217346; }
.pictabs span:nth-of-type(2) { width: 63px; }
.picstatus { height: 21px; background: #217346; color: #fff; display: flex; align-items: center; gap: 17px; padding-left: 7px; }
.para24 { margin: 19px 0 0 -36px; display: flex; align-items: center; font: 16px/24px "Liberation Serif", serif; color: #000; }
.para24 span { width: 37px; }
.overlay { position: absolute; left: 0; top: 0; }
.callout { position: absolute; left: 781px; top: 212px; width: 350px; height: 160px; border: 1px solid #f00; padding: 5px 0 0 9px; font: 27.700px/48px "Liberation Serif", serif; color: #f00; }
.callout svg { display: inline-block; }
```
FILE: app.js
```
const el = (cls, html = '') => `<div class="${cls}">${html}</div>`;

// Column headings of the worksheet
const heads = ['A', 'B', 'C', 'D', 'E', 'F', 'K', 'L', 'M', 'N', 'O', 'P', 'Q', 'R', 'S', 'T', 'U', ''];
document.getElementById('colheads').innerHTML =
  el('corner', '<svg width="17" height="17"><path d="M17 0v17H0z" fill="#dcdcdc"/></svg>') +
  heads.map(h => el(h === 'N' ? 'on' : '', h)).join('');

const labels = { 13: 'Employee ID', 14: 'Name', 16: 'Join Date', 17: 'Department', 18: 'Position', 19: 'Salary Date', 20: 'Calculation Period' };
const period = '00 Jan 1900  to  00 Jan 1900';

// Worksheet rows: [number, height]
const sheetRows = [['b1', 3], ['p2', 3], ['b2', 3], ['p3', 3], ['b3', 3], [7, 50], [8, 11], [9, 50], [10, 34], [11, 56]];
for (let n = 12; n <= 20; n++) sheetRows.push([n, 34]);
sheetRows.push([21, 22], [22, 10], [23, 24], [24, 18]);
for (let n = 25; n <= 36; n++) sheetRows.push([n, 22]);

document.getElementById('rows').innerHTML = sheetRows.map(([n, h]) => {
  const isNum = typeof n === 'number';
  let out = el('num' + (n === 14 ? ' on' : ''), isNum ? n : '');
  const cells = ['', labels[n] || '', labels[n] ? ':' : '', n === 20 ? period : '', '', ''];
  let cls = ['', '', labels[n] ? 'colon' : '', '', '', ''];
  if (n === 23) { cells[1] = 'Item'; cells[3] = 'Remark'; cells[4] = 'Amount'; }
  if (!isNum) {
    cls = cls.map(() => (n[0] === 'b' ? 'band' : 'pre') + n[1]);
    if (n[0] === 'b') { cls[1] += ' bits'; cells[1] = '<i></i>'; }
  }
  if (n === 21) cls = cls.map(c => c + ' b-black');
  if (n === 23) { [1, 2, 3, 4].forEach(i => cls[i] += ' b-black'); cls[4] += ' right'; }
  if (n >= 22) cls[5] += ' r-black';
  if (n === 11) out += el('') + el('title', 'Employee Payslip') + el('');
  else out += cells.map((c, i) => el(cls[i], c)).join('');
  out += el('').repeat(12);
  return `<div class="row" style="height:${h}px">${out}</div>`;
}).join('');

// Rows of the embedded worksheet picture: [number, bottom edge]
const pic = [[10, 173], [11, 201], [12, 218], [13, 235], [14, 252], [15, 269], [16, 286], [17, 303], [18, 321], [19, 338], [20, 355], [21, 366], [22, 371], [23, 383], [24, 393]];
for (let n = 25; n <= 57; n++) pic.push([n, Math.round(403.800 + 11.390 * (n - 25))]);
pic.push([58, 780], [75, 789], [76, 799], [77, 808], [78, 818], [79, 827], [80, 837], [81, 846], [82, 856], ['b', 858], ['g', 861], ['b', 863], ['g', 865], ['b', 867], [88, 877], [89, 886], [90, 895], [91, 905], [92, 914], [93, 917]);
let top0 = 171;
document.getElementById('picrows').innerHTML = pic.map(([n, end]) => {
  const h = end - top0; top0 = end;
  const cells = ['', labels[n] || '', labels[n] ? ':' : '', n === 20 ? period : '', '', ''];
  let cls = ['', '', labels[n] ? 'colon' : '', '', '', ''];
  if (n === 23) { cells[1] = 'Item'; cells[3] = 'Remark'; cells[4] = 'Amount'; cls[4] = 'right'; }
  if (n === 82) { cells[1] = 'Authorized Signature'; cells[4] = 'Received By'; }
  if (n === 'b') cls = cls.map(() => 'band');
  if (n === 21 || n === 58) cls = cls.map(c => c + ' b-black');
  if (n === 23) [1, 2, 3, 4].forEach(i => cls[i] += ' b-black');
  if (n === 81) [1, 4, 5].forEach(i => cls[i] += ' b-black');
  if (n >= 22 && n <= 58) cls[5] += ' r-black';
  let out = el('num' + (n === 20 ? ' on' : ''), typeof n === 'number' && n !== 10 && n !== 93 ? n : '');
  if (n === 11) out += el('') + el('title', 'Employee Wages List') + el('').repeat(3);
  else out += cells.map((c, i) => el(cls[i], c)).join('');
  return `<div class="prow" style="height:${h}px">${out}${el('')}</div>`;
}).join('');

// Ruler numbers
let marks = '';
for (let n = 2; n <= 116; n += 2) marks += `<span>${n}</span>`;
document.getElementById('marks').innerHTML = marks;

// Style gallery: [name, sample, class]
document.getElementById('styles').innerHTML = [
  ['↲ 內文', 'AaBbCcDd', ''], ['↲ 標題 1', 'AaBbCc', 'h1'], ['↲ 標題 2', 'AaBbC', 'h2'], ['↲ 標題 3', 'AaBbC', 'h3'],
  ['↲ 標題 4', 'AaBbCcDd', 'bold'], ['↲ 無間距', 'AaBbCcDd', ''], ['標題', 'AaBbCc', 'ttl'], ['副標題', 'AaBbCcD', 'sub'],
  ['區別強調', 'AaBbCcDd', 'it grey'], ['強調斜體', 'AaBbCcDd', 'it'], ['鮮明強調', 'AaBbCcDd', 'blue'], ['強調粗體', 'AaBbCcDd', 'bold'],
  ['引文', 'AaBbCcDd', 'it grey'], ['鮮明引文', 'AaBbCcDd', 'blue lined'], ['區別參考', 'AaBbCcDd', 'caps']
].map(([name, s, c], i) => `<div class="style${i ? '' : ' on'}"><b class="${c}">${s}</b>${name}</div>`).join('');

// Taskbar buttons: [icon, state]
const apps = [['start'], ['search'], ['view'], ['ie', 'run'], ['edge'], ['folder', 'many'], ['store'], ['chrome', 'many'], ['note', 'many'], ['cmd'], ['calc'], ['mail'],
  ['rdp', 'run'], ['mon', 'run'], ['tv', 'run'], ['outlook', 'run'], ['flow', 'run'], ['excel', 'now'], ['nut', 'many'], ['memo', 'run'], ['fp', 'run'], ['word', 'run'], ['tool', 'run']];
document.querySelectorAll('.apps').forEach(bar => {
  bar.innerHTML = apps.map(([id, st]) => `<div class="${st || ''}"><svg width="24" height="24"><use href="#t-${id}"/></svg>${st ? '<i></i>' : ''}</div>`).join('');
});
```
